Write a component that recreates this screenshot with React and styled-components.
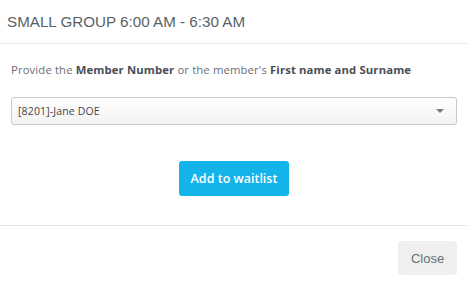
import React from "react";
import styled, { createGlobalStyle } from "styled-components";

const Global = createGlobalStyle`
  html, body { margin: 0; padding: 0; background: #fff; }
  body { font-family: "Liberation Sans", Arial, sans-serif; }
  * { box-sizing: border-box; }
`;

const Modal = styled.div`
  width: 467px;
  height: 281px;
  background: #fff;
  display: flex;
  flex-direction: column;
`;

const Header = styled.div`
  height: 44px;
  padding: 0 7px;
  display: flex;
  align-items: center;
  border-bottom: 1px solid #e5e5e5;
`;

const Title = styled.h4`
  margin: 0;
  font-family: "Liberation Sans", Arial, sans-serif;
  font-weight: normal;
  font-size: 15.2px;
  color: #5a5f66;
  padding-bottom: 1px;
`;

const Body = styled.div`
  height: 182px;
  padding: 18px 11px 0 11px;
  font-family: "Open Sans", "Lato", sans-serif;
  border-bottom: 1px solid #e5e5e5;
  display: flex;
  flex-direction: column;
`;

const Prompt = styled.p`
  margin: 0;
  font-size: 11.3px;
  letter-spacing: 0.13px;
  color: #6b6f75;
  b { color: #4a4e55; font-weight: 700; }
`;

const Select = styled.div`
  margin-top: 20px;
  height: 28px;
  width: 446px;
  border: 1px solid #c9c9c9;
  border-radius: 3px;
  background: linear-gradient(#ffffff, #f3f3f3);
  display: flex;
  align-items: center;
  justify-content: space-between;
  padding: 0 12px 0 6px;
  font-size: 10.5px;
  letter-spacing: 0.15px;
  color: #444;
`;

const Caret = styled.span`
  width: 0;
  height: 0;
  border-left: 4px solid transparent;
  border-right: 4px solid transparent;
  border-top: 4px solid #777;
`;

const Center = styled.div`
  margin-top: 36px;
  display: flex;
  justify-content: center;
`;

const PrimaryButton = styled.button`
  width: 110px;
  height: 35px;
  margin-left: 1px;
  border: none;
  border-radius: 3px;
  background: #14b4ea;
  color: #fff;
  font-family: "Open Sans", "Lato", sans-serif;
  font-size: 12.5px;
  font-weight: 600;
  padding: 0;
`;

const Footer = styled.div`
  flex: 1;
  display: flex;
  justify-content: flex-end;
  align-items: flex-start;
  padding: 15px 10px 0 0;
`;

const CloseButton = styled.button`
  width: 59px;
  height: 34px;
  border: none;
  border-radius: 3px;
  background: #efefef;
  color: #6b6f75;
  font-family: "Liberation Sans", Arial, sans-serif;
  font-size: 13px;
`;

export default function App() {
  return (
    <>
      <Global />
      <Modal>
        <Header>
          <Title>SMALL GROUP 6:00 AM - 6:30 AM</Title>
        </Header>
        <Body>
          <Prompt>
            Provide the <b>Member Number</b> or the member's <b>First name and Surname</b>
          </Prompt>
          <Select>
            <span>[8201]-Jane DOE</span>
            <Caret />
          </Select>
          <Center>
            <PrimaryButton>Add to waitlist</PrimaryButton>
          </Center>
        </Body>
        <Footer>
          <CloseButton>Close</CloseButton>
        </Footer>
      </Modal>
    </>
  );
}
